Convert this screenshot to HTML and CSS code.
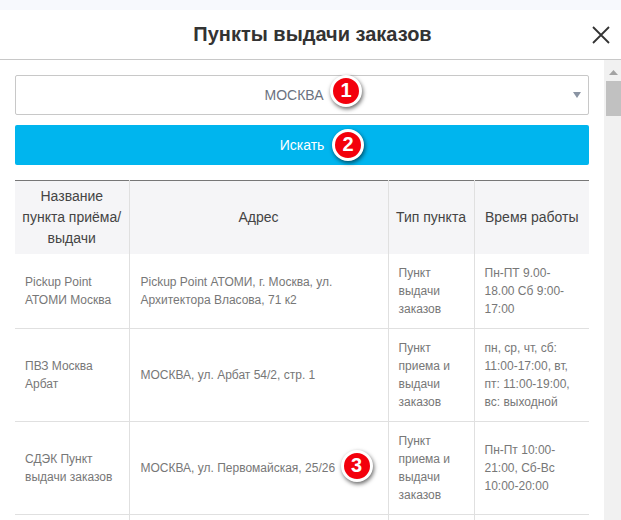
FILE: index.html
```html
<!DOCTYPE html>
<html lang="ru">
<head>
<meta charset="utf-8">
<title>Пункты выдачи заказов</title>
<link rel="stylesheet" href="styles.css">
</head>
<body>
<div class="strip"></div>
<header class="head">
  <h1 class="title">Пункты выдачи заказов</h1>
  <svg class="close" width="18" height="18" viewBox="0 0 18 18"><path d="M1 1L17 17M17 1L1 17" stroke="#333" stroke-width="1.8" fill="none"/></svg>
</header>
<div class="main">
  <div class="content">
    <div class="select">
      <span class="select-text">МОСКВА</span>
      <span class="badge badge-1">1</span>
      <span class="caret"></span>
    </div>
    <div class="button">
      <span>Искать</span>
      <span class="badge badge-2">2</span>
    </div>
    <table class="points">
      <colgroup><col class="c1"><col class="c2"><col class="c3"><col class="c4"></colgroup>
      <thead>
        <tr><th>Название пункта приёма/ выдачи</th><th>Адрес</th><th>Тип пункта</th><th>Время работы</th></tr>
      </thead>
      <tbody>
        <tr><td>Pickup Point АТОМИ Москва</td><td>Pickup Point АТОМИ, г. Москва, ул. Архитектора Власова, 71 к2</td><td>Пункт выдачи заказов</td><td>Пн-ПТ 9.00-18.00 Сб 9:00-17:00</td></tr>
        <tr><td>ПВЗ Москва Арбат</td><td>МОСКВА, ул. Арбат 54/2, стр. 1</td><td>Пункт приема и выдачи заказов</td><td>пн, ср, чт, сб: 11:00-17:00, вт, пт: 11:00-19:00, вс: выходной</td></tr>
        <tr><td>СДЭК Пункт выдачи заказов</td><td class="addr">МОСКВА, ул. Первомайская, 25/26<span class="badge badge-3">3</span></td><td>Пункт приема и выдачи заказов</td><td>Пн-Пт 10:00-21:00, Сб-Вс 10:00-20:00</td></tr>
        <tr><td>&nbsp;</td><td></td><td></td><td></td></tr>
      </tbody>
    </table>
  </div>
  <div class="scrollbar">
    <svg class="arrow" width="9" height="5" viewBox="0 0 9 5"><path d="M4.5 0L9 5H0Z" fill="#a3a3a3"/></svg>
    <div class="thumb"></div>
  </div>
</div>
</body>
</html>
```
FILE: styles.css
```css
* { box-sizing: border-box; }
html, body { margin: 0; height: 520px; overflow: hidden; }
body {
  display: flex;
  flex-direction: column;
  background: #fff;
  font-family: "Liberation Sans", Arial, sans-serif;
  color: #777;
}
.strip { height: 10px; background: #f7f9fd; flex: none; }
.head {
  height: 50px;
  flex: none;
  display: flex;
  align-items: center;
  justify-content: center;
  border-bottom: 1px solid #c8c8c8;
  position: relative;
  padding-left: 4px;
}
.title { margin: 0; font-size: 20px; font-weight: 700; color: #333; }
.close { position: absolute; right: 11px; top: 16px; }
.main { flex: 1; display: flex; min-height: 0; overflow: hidden; }
.content { flex: 1; padding: 15px 15px 0; min-width: 0; }
.scrollbar { width: 17px; background: #f1f1f1; flex: none; display: flex; flex-direction: column; align-items: center; }
.arrow { margin: 10px 0 6px 2px; }
.thumb { width: 15px; height: 35px; background: #c1c1c1; margin-left: 2px; }
.select {
  height: 40px;
  border: 1px solid #c8c8c8;
  border-radius: 2px;
  display: flex;
  align-items: center;
  justify-content: center;
  position: relative;
  padding-right: 16px;
  font-size: 14px;
  color: #6b7280;
  background: #fff;
}
.caret {
  position: absolute;
  right: 7px;
  top: 16px;
  width: 0;
  height: 0;
  border-left: 4px solid transparent;
  border-right: 4px solid transparent;
  border-top: 6px solid #8a94a3;
}
.button {
  height: 40px;
  margin-top: 10px;
  background: #00b5ee;
  border-radius: 2px;
  color: #fff;
  font-size: 14px;
  display: flex;
  align-items: center;
  justify-content: center;
  position: relative;
}
.badge {
  position: absolute;
  width: 32px;
  height: 32px;
  border-radius: 50%;
  background: #f3000c;
  border: 3.5px solid #fff;
  box-shadow: 1px 2px 4px rgba(0,0,0,.6);
  color: #fff;
  font-weight: 700;
  font-size: 20px;
  line-height: 25px;
  text-align: center;
}
.badge-1 { left: 314px; top: -1px; }
.badge-2 { left: 317px; top: 4px; }
.badge-3 { left: 211px; top: 28px; }
.points {
  width: 574px;
  margin-top: 15px;
  border-collapse: collapse;
  table-layout: fixed;
  border-top: 1px solid #777;
}
.c1 { width: 114px; }
.c2 { width: 259px; }
.c3 { width: 86px; }
.c4 { width: 115px; }
th {
  background: #f5f5f7;
  font-weight: 400;
  font-size: 14px;
  line-height: 21px;
  color: #444;
  padding: 5px 7px;
  text-align: center;
  border-left: 1px solid #e0e0e0;
  height: 73px;
}
th:first-child, td:first-child { border-left: 0; }
td {
  font-size: 12px;
  line-height: 18px;
  padding: 10px;
  vertical-align: middle;
  border-left: 1px solid #e0e0e0;
  border-bottom: 1px solid #e0e0e0;
}
td:nth-child(2) { padding-left: 11px; }
td.addr { position: relative; }
```
